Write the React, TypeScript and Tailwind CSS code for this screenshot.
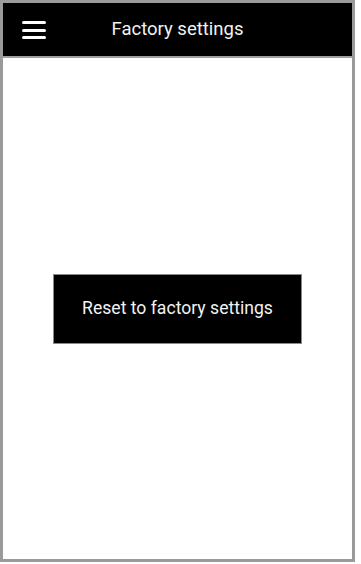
import React from 'react';

const App = () => {
  return (
    <div className="w-[361px] h-[564px] bg-white" style={{ fontFamily: 'Roboto, "Noto Sans", sans-serif' }}>
      <div className="w-[355px] h-[562px] border-[3px] border-[#9a9a9a] flex flex-col">
        <header className="h-[55px] bg-black border-b-2 border-[#a0a0a0] flex items-center relative shrink-0">
          <button className="absolute left-[19px] top-[18px] w-[24px] h-[18px] flex flex-col justify-between">
            <span className="block h-[3px] w-full bg-white rounded-sm" />
            <span className="block h-[3px] w-full bg-white rounded-sm" />
            <span className="block h-[3px] w-full bg-white rounded-sm" />
          </button>
          <h1 className="w-full text-center text-[#f2f2f2] text-[18.5px] leading-none -mt-[1px]">Factory settings</h1>
        </header>
        <main className="flex-1 flex items-center justify-center">
          <button className="w-[249px] h-[70px] bg-black border border-[#8a8a8a] text-[#f2f2f2] text-[17.6px]">
            Reset to factory settings
          </button>
        </main>
      </div>
    </div>
  );
};

export default App;
